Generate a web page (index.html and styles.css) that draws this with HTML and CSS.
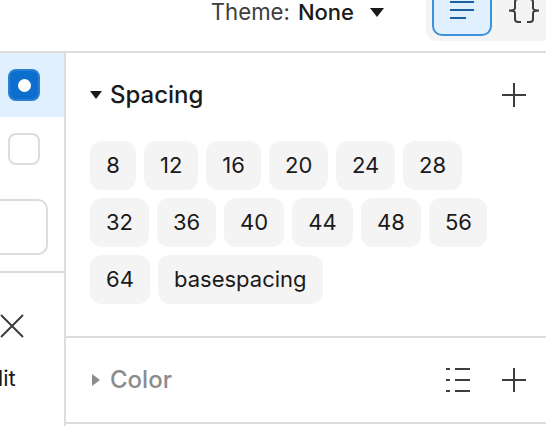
FILE: index.html
```html
<!DOCTYPE html>
<html lang="en">
<head>
<meta charset="utf-8">
<title>Spacing</title>
<link rel="stylesheet" href="styles.css">
</head>
<body>
<header class="topbar">
  <div class="theme">
    <span class="theme-label">Theme:</span>
    <span class="theme-value">None</span>
    <svg class="theme-caret" width="14" height="9" viewBox="0 0 14 9"><path d="M0 0H14L7 9Z"/></svg>
  </div>
  <div class="toggle">
    <button class="toggle-btn active">
      <svg width="26" height="20" viewBox="0 0 26 20"><path d="M1 1H25M1 9H25M1 17H17"/></svg>
    </button>
    <button class="toggle-btn code">
      <svg width="32" height="26" viewBox="0 0 32 26"><path d="M13 1H10C8 1 7 2 7 4V10C7 11.500 5 12.500 1 12.500C5 12.500 7 13.500 7 15V21C7 23 8 24 10 24H13M19 1H22C24 1 25 2 25 4V10C25 11.500 27 12.500 31 12.500C27 12.500 25 13.500 25 15V21C25 23 24 24 22 24H19"/></svg>
    </button>
  </div>
</header>
<div class="main">
  <aside class="sidebar">
    <div class="side-row selected"><span class="check on"><span class="dot"></span></span></div>
    <div class="side-row"><span class="check"></span></div>
    <div class="side-input"><span class="input-box"></span></div>
    <div class="side-foot">
      <svg class="close" width="24" height="24" viewBox="0 0 24 24"><path d="M1 1L23 23M23 1L1 23"/></svg>
      <span class="edit">Edit</span>
    </div>
  </aside>
  <main class="panel">
    <section class="section open">
      <div class="section-head">
        <svg class="caret" width="12" height="8" viewBox="0 0 12 8"><path d="M0 0H12L6 8Z"/></svg>
        <h2 class="title">Spacing</h2>
        <svg class="icon plus" width="24" height="24" viewBox="0 0 24 24"><path d="M12 0V24M0 12H24"/></svg>
      </div>
      <div class="chips">
        <span class="chip w46">8</span><span class="chip w54">12</span><span class="chip w55">16</span><span class="chip w59">20</span><span class="chip w59">24</span><span class="chip w59">28</span>
        <span class="chip w59">32</span><span class="chip w59">36</span><span class="chip w60">40</span><span class="chip w61">44</span><span class="chip w60">48</span><span class="chip w58">56</span>
        <span class="chip w60">64</span><span class="chip">basespacing</span>
      </div>
    </section>
    <section class="section closed">
      <div class="section-head">
        <svg class="caret" width="8" height="12" viewBox="0 0 8 12"><path d="M0 0V12L8 6Z"/></svg>
        <h2 class="title">Color</h2>
        <svg class="icon list" width="24" height="24" viewBox="0 0 24 24"><path d="M0 1H4M9 1H24M0 12H4M9 12H24M0 23H4M9 23H24"/></svg>
        <svg class="icon plus" width="24" height="24" viewBox="0 0 24 24"><path d="M12 0V24M0 12H24"/></svg>
      </div>
    </section>
  </main>
</div>
</body>
</html>
```
FILE: styles.css
```css
* { box-sizing: border-box; }
html, body { margin: 0; height: 100%; }
body {
  width: 546px;
  height: 426px;
  overflow: hidden;
  background: #fff;
  font-family: Inter, "Liberation Sans", sans-serif;
  color: #1a1a1a;
}
.topbar {
  height: 53px;
  display: flex;
  justify-content: flex-end;
  align-items: flex-end;
  border-bottom: 2px solid #dcdcdc;
  overflow: hidden;
}
.theme {
  display: flex;
  align-items: center;
  gap: 8px;
  height: 24px;
  margin: 0 42px 27px 0;
  font-size: 22px;
  line-height: 24px;
}
.theme-label { color: #3d3d3d; font-size: 22.200px; }
.theme-value { font-weight: 500; color: #1a1a1a; }
.theme-caret { margin-left: 8px; fill: #1a1a1a; }
.toggle {
  display: flex;
  width: 120px;
  height: 60px;
  margin: 0 0 10px 0;
  background: #f4f4f4;
  border-radius: 10px 0 0 10px;
  flex: none;
}
.toggle-btn {
  height: 60px;
  padding: 0;
  border: 0;
  background: transparent;
  display: flex;
  align-items: flex-end;
  justify-content: center;
}
.toggle-btn svg { fill: none; stroke-width: 2; }
.toggle-btn.active {
  width: 60px;
  margin-left: 6px;
  margin-bottom: 5px;
  height: 55px;
  padding-bottom: 13px;
  background: #e0f0ff;
  border: 2px solid #3d92dc;
  border-radius: 10px;
}
.toggle-btn.active svg { stroke: #1d5f9f; }
.toggle-btn.code { width: 54px; padding: 0 0 17px 10px; }
.toggle-btn.code svg { stroke: #3d3d3d; }
.main { display: flex; height: 373px; }
.sidebar {
  width: 66px;
  flex: none;
  border-right: 2px solid #dcdcdc;
  overflow: hidden;
}
.side-row {
  height: 64px;
  display: flex;
  align-items: center;
  padding-left: 8px;
}
.check {
  width: 32px;
  height: 32px;
  border: 2px solid #dcdcdc;
  border-radius: 8px;
  display: flex;
  align-items: center;
  justify-content: center;
  background: #fff;
}
.side-row.selected { background: #e0f0fe; }
.check.on { background: #0d6fcd; border-color: #2a80d2; }
.dot { width: 13px; height: 13px; border-radius: 50%; background: #fff; }
.side-input {
  height: 92px;
  border-bottom: 2px solid #dcdcdc;
  overflow: hidden;
  padding-top: 18px;
}
.input-box {
  display: block;
  width: 72px;
  height: 56px;
  margin-left: -24px;
  border: 2px solid #dcdcdc;
  border-radius: 10px;
}
.side-foot {
  display: flex;
  flex-direction: column;
  align-items: flex-start;
  gap: 28px;
  padding-top: 41px;
}
.close { fill: none; stroke: #3d3d3d; stroke-width: 2; }
.edit { font-size: 22px; line-height: 24px; margin-left: -23.500px; color: #1a1a1a; }
.panel { flex: 1; min-width: 0; }
.section { border-bottom: 2px solid #dcdcdc; padding: 0 20px 0 24px; }
.section.open { height: 285px; padding-top: 30px; }
.section.closed { height: 86px; padding-top: 30px; }
.section-head {
  display: flex;
  align-items: center;
  height: 24px;
}
.title {
  margin: 0 0 0 8px;
  font-size: 24px;
  font-weight: 500;
  line-height: 24px;
  color: #1a1a1a;
  flex: 1;
}
.caret { fill: #1a1a1a; }
.closed .caret { fill: #8c8c8c; margin-left: 2px; margin-right: 2px; }
.closed .title { color: #8c8c8c; }
.icon { fill: none; stroke: #3d3d3d; stroke-width: 2; flex: none; }
.list { margin-right: 32px; }
.chips {
  display: flex;
  flex-wrap: wrap;
  gap: 8.500px 8px;
  margin-top: 34px;
  width: 420px;
}
.chip {
  height: 48.500px;
  padding: 0 16px;
  border-radius: 12px;
  background: #f4f4f4;
  font-size: 22px;
  line-height: 48.500px;
  text-align: center;
  color: #1a1a1a;
  flex: none;
}
.w46 { width: 46px; }
.w54 { width: 54px; }
.w55 { width: 55px; }
.w58 { width: 58px; }
.w59 { width: 59px; }
.w60 { width: 60px; }
.w61 { width: 61px; }
```
